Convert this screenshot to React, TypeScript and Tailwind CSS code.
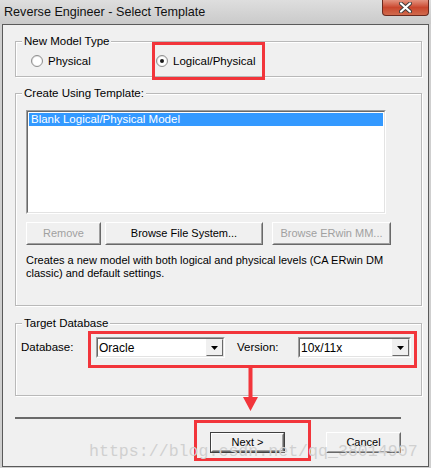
import React from 'react';

const ui = "font-['Liberation_Sans',Arial,sans-serif]";

function Radio({ checked }: { checked?: boolean }) {
  return (
    <span className="w-[12px] h-[12px] rounded-full border border-[#8f8f8f] bg-gradient-to-br from-[#dcdcdc] to-white flex items-center justify-center shrink-0">
      <span className="w-[8px] h-[8px] rounded-full bg-white flex items-center justify-center">
        {checked && <span className="w-[4px] h-[4px] rounded-full bg-[#1a1a1a]" />}
      </span>
    </span>
  );
}

function GroupBox({
  label,
  className,
  children,
}: {
  label: string;
  className: string;
  children: React.ReactNode;
}) {
  return (
    <div className={`relative border border-[#b9b9b9] shadow-[inset_1px_1px_0_#fff,1px_1px_0_#fff] ${className}`}>
      <span className="absolute left-[6px] top-[-8px] px-[2px] bg-[#f0f0f0] text-[11.5px] leading-[14px] text-black">
        {label}
      </span>
      {children}
    </div>
  );
}

function Button({
  label,
  width,
  disabled,
  isDefault,
}: {
  label: string;
  width: string;
  disabled?: boolean;
  isDefault?: boolean;
}) {
  return (
    <div className={`${width} h-full flex ${isDefault ? 'border border-[#404040]' : ''}`}>
      <div className="flex-1 border border-t-white border-l-white border-r-[#696969] border-b-[#696969] bg-[#f0f0f0] flex">
        <div className="flex-1 border border-t-[#f0f0f0] border-l-[#f0f0f0] border-r-[#a0a0a0] border-b-[#a0a0a0] flex items-center justify-center text-[11px]">
          <span className={disabled ? 'text-[#a0a0a0]' : 'text-black'}>{label}</span>
        </div>
      </div>
    </div>
  );
}

function Combo({ value, width }: { value: string; width: string }) {
  return (
    <div className={`${width} h-[21px] border border-t-[#a0a0a0] border-l-[#a0a0a0] border-r-white border-b-white flex`}>
      <div className="flex-1 border border-t-[#696969] border-l-[#696969] border-r-[#e3e3e3] border-b-[#e3e3e3] bg-white flex items-center">
        <span className="flex-1 pl-[1px] text-[12px] leading-none text-black">{value}</span>
        <div className="w-[17px] h-full border border-t-[#f0f0f0] border-l-[#f0f0f0] border-r-[#696969] border-b-[#696969] bg-[#f0f0f0] flex items-center justify-center">
          <svg width="7" height="4" viewBox="0 0 7 4">
            <polygon points="0,0 7,0 3.5,4" fill="#000" />
          </svg>
        </div>
      </div>
    </div>
  );
}

export default function App() {
  return (
    <div className={`relative w-[431px] h-[468px] overflow-hidden bg-[#cfcfcf] ${ui}`}>
      {/* Title bar */}
      <div className="h-[24px] flex items-center justify-between bg-gradient-to-b from-[#dedede] to-[#cacaca]">
        <span className="pl-[4px] text-[12.6px] text-[#111]">Reverse Engineer - Select Template</span>
        <div className="self-start mr-[2px] w-[47px] h-[16px] rounded-b-[4px] border border-t-0 border-[#6b2a1f] bg-gradient-to-b from-[#e3927f] via-[#c9462d] to-[#d06a4d] flex items-center justify-center">
          <svg width="13" height="11" viewBox="0 0 13 11">
            <path d="M2 1.5 L11 9.5 M11 1.5 L2 9.5" stroke="#3b3b3b" strokeWidth="4" strokeLinecap="round" />
            <path d="M2 1.5 L11 9.5 M11 1.5 L2 9.5" stroke="#fff" strokeWidth="2.2" strokeLinecap="round" />
          </svg>
        </div>
      </div>

      {/* Client area */}
      <div className="ml-[2px] w-[427px] h-[443px] border border-[#5a5a5a] bg-[#f0f0f0] pl-[12px]">
        <GroupBox label="New Model Type" className="mt-[16px] w-[407px] h-[36px]">
          <div className="pt-[12px] pl-[15px] flex items-center text-[11.5px] leading-[14px]">
            <div className="w-[125px] flex items-center gap-[5px]">
              <Radio />
              <span>Physical</span>
            </div>
            <div className="flex items-center gap-[5px]">
              <Radio checked />
              <span>Logical/Physical</span>
            </div>
          </div>
          <div className="absolute left-[136px] top-[0px] w-[113px] h-[38px] border-[3px] border-[#f2353b]" />
        </GroupBox>

        <GroupBox label="Create Using Template:" className="mt-[16px] w-[407px] h-[213px]">
          <div className="pt-[16px] pl-[10px]">
            <div className="w-[360px] h-[104px] border border-t-[#a0a0a0] border-l-[#a0a0a0] border-r-white border-b-white flex">
              <div className="flex-1 border border-t-[#696969] border-l-[#696969] border-r-[#e3e3e3] border-b-[#e3e3e3] bg-white pt-[1px] px-[1px]">
                <div className="h-[13px] bg-[#3399ff] text-white text-[11.5px] leading-[13px] pl-[2px]">
                  Blank Logical/Physical Model
                </div>
              </div>
            </div>
            <div className="mt-[8px] h-[23px] flex gap-[4px]">
              <Button label="Remove" width="w-[75px]" disabled />
              <Button label="Browse File System..." width="w-[158px]" />
              <div className="w-[1px]" />
              <Button label="Browse ERwin MM..." width="w-[119px]" disabled />
            </div>
            <p className="mt-[9px] text-[11px] leading-[13px] text-black w-[372px]">
              Creates a new model with both logical and physical levels (CA ERwin DM classic) and default settings.
            </p>
          </div>
        </GroupBox>

        <GroupBox label="Target Database" className="mt-[17px] w-[407px] h-[73px]">
          <div className="pt-[13px] pl-[5px] flex items-center text-[11.5px]">
            <span className="w-[75px]">Database:</span>
            <Combo value="Oracle" width="w-[129px]" />
            <span className="ml-[12px] w-[61px]">Version:</span>
            <Combo value="10x/11x" width="w-[113px]" />
          </div>
          <div className="absolute left-[72px] top-[7px] w-[329px] h-[37px] border-[3px] border-[#f2353b]" />
        </GroupBox>

        <div className="mt-[21px] w-[386px] h-[2px] bg-[#6a6a6a]" />

        <div className="mt-[13px] h-[21px] flex">
          <div className="ml-[195px] h-[21px]">
            <Button label="Next >" width="w-[75px]" isDefault />
          </div>
          <div className="ml-[41px] h-[21px]">
            <Button label="Cancel" width="w-[75px]" />
          </div>
        </div>
      </div>

      {/* Annotation arrow */}
      <svg className="absolute left-[243px] top-[366px]" width="15" height="45" viewBox="0 0 15 45">
        <polygon points="5.5,0 9.5,0 9.5,31 15,31 7.5,45 0,31 5.5,31" fill="#f2353b" />
      </svg>

      {/* Red box around Next */}
      <div className="absolute left-[194px] top-[420px] w-[117px] h-[41px] border-[3px] border-[#f2353b]" />

      {/* Watermark */}
      <span className="absolute left-[89px] top-[440px] font-['Liberation_Mono',monospace] text-[16.6px] text-[#d0d0d0] whitespace-nowrap pointer-events-none">
        https://blog.csdn.net/qq_38014907
      </span>
    </div>
  );
}
